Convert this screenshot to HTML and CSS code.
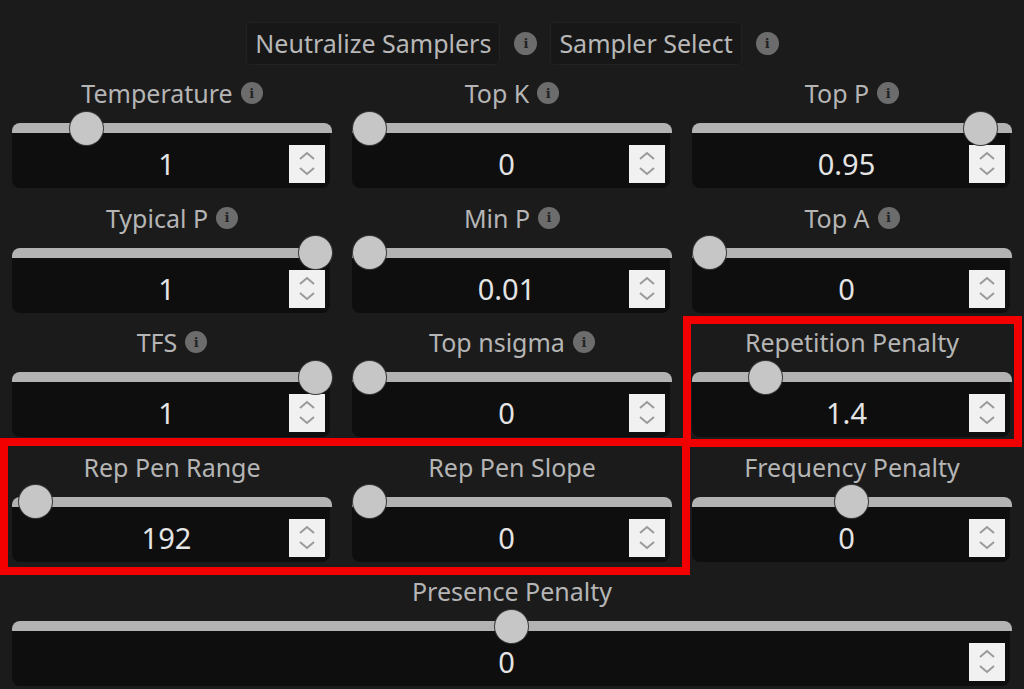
FILE: index.html
```html
<!DOCTYPE html>
<html lang="en">
<head>
<meta charset="utf-8">
<title>Samplers</title>
<link rel="stylesheet" href="styles.css">
</head>
<body>
<div class="panel">
  <div class="header">
    <div class="menu-btn">Neutralize Samplers</div>
    <span class="info big">i</span>
    <div class="menu-btn">Sampler Select</div>
    <span class="info big">i</span>
  </div>

  <div class="grid">
    <div class="cell">
      <div class="label"><span>Temperature</span><span class="info">i</span></div>
      <div class="track"><span class="thumb" style="left:74px"></span></div>
      <div class="field"><span class="value">1</span><span class="spin"><svg viewBox="0 0 36 38" width="36" height="38"><path d="M11 14 L18 8 L25 14 M11 23 L18 29 L25 23"/></svg></span></div>
    </div>
    <div class="cell">
      <div class="label"><span>Top K</span><span class="info">i</span></div>
      <div class="track"><span class="thumb" style="left:17px"></span></div>
      <div class="field"><span class="value">0</span><span class="spin"><svg viewBox="0 0 36 38" width="36" height="38"><path d="M11 14 L18 8 L25 14 M11 23 L18 29 L25 23"/></svg></span></div>
    </div>
    <div class="cell">
      <div class="label"><span>Top P</span><span class="info">i</span></div>
      <div class="track"><span class="thumb" style="left:288px"></span></div>
      <div class="field"><span class="value">0.95</span><span class="spin"><svg viewBox="0 0 36 38" width="36" height="38"><path d="M11 14 L18 8 L25 14 M11 23 L18 29 L25 23"/></svg></span></div>
    </div>

    <div class="cell">
      <div class="label"><span>Typical P</span><span class="info">i</span></div>
      <div class="track"><span class="thumb" style="left:303px"></span></div>
      <div class="field"><span class="value">1</span><span class="spin"><svg viewBox="0 0 36 38" width="36" height="38"><path d="M11 14 L18 8 L25 14 M11 23 L18 29 L25 23"/></svg></span></div>
    </div>
    <div class="cell">
      <div class="label"><span>Min P</span><span class="info">i</span></div>
      <div class="track"><span class="thumb" style="left:17px"></span></div>
      <div class="field"><span class="value">0.01</span><span class="spin"><svg viewBox="0 0 36 38" width="36" height="38"><path d="M11 14 L18 8 L25 14 M11 23 L18 29 L25 23"/></svg></span></div>
    </div>
    <div class="cell">
      <div class="label"><span>Top A</span><span class="info">i</span></div>
      <div class="track"><span class="thumb" style="left:17px"></span></div>
      <div class="field"><span class="value">0</span><span class="spin"><svg viewBox="0 0 36 38" width="36" height="38"><path d="M11 14 L18 8 L25 14 M11 23 L18 29 L25 23"/></svg></span></div>
    </div>

    <div class="cell">
      <div class="label"><span>TFS</span><span class="info">i</span></div>
      <div class="track"><span class="thumb" style="left:303px"></span></div>
      <div class="field"><span class="value">1</span><span class="spin"><svg viewBox="0 0 36 38" width="36" height="38"><path d="M11 14 L18 8 L25 14 M11 23 L18 29 L25 23"/></svg></span></div>
    </div>
    <div class="cell">
      <div class="label"><span>Top nsigma</span><span class="info">i</span></div>
      <div class="track"><span class="thumb" style="left:17px"></span></div>
      <div class="field"><span class="value">0</span><span class="spin"><svg viewBox="0 0 36 38" width="36" height="38"><path d="M11 14 L18 8 L25 14 M11 23 L18 29 L25 23"/></svg></span></div>
    </div>
    <div class="cell">
      <div class="label"><span>Repetition Penalty</span></div>
      <div class="track"><span class="thumb" style="left:73px"></span></div>
      <div class="field"><span class="value">1.4</span><span class="spin"><svg viewBox="0 0 36 38" width="36" height="38"><path d="M11 14 L18 8 L25 14 M11 23 L18 29 L25 23"/></svg></span></div>
    </div>

    <div class="cell">
      <div class="label"><span>Rep Pen Range</span></div>
      <div class="track"><span class="thumb" style="left:23px"></span></div>
      <div class="field"><span class="value">192</span><span class="spin"><svg viewBox="0 0 36 38" width="36" height="38"><path d="M11 14 L18 8 L25 14 M11 23 L18 29 L25 23"/></svg></span></div>
    </div>
    <div class="cell">
      <div class="label"><span>Rep Pen Slope</span></div>
      <div class="track"><span class="thumb" style="left:17px"></span></div>
      <div class="field"><span class="value">0</span><span class="spin"><svg viewBox="0 0 36 38" width="36" height="38"><path d="M11 14 L18 8 L25 14 M11 23 L18 29 L25 23"/></svg></span></div>
    </div>
    <div class="cell">
      <div class="label"><span>Frequency Penalty</span></div>
      <div class="track"><span class="thumb" style="left:159px"></span></div>
      <div class="field"><span class="value">0</span><span class="spin"><svg viewBox="0 0 36 38" width="36" height="38"><path d="M11 14 L18 8 L25 14 M11 23 L18 29 L25 23"/></svg></span></div>
    </div>

    <div class="cell wide">
      <div class="label"><span>Presence Penalty</span></div>
      <div class="track"><span class="thumb" style="left:499px"></span></div>
      <div class="field"><span class="value">0</span><span class="spin"><svg viewBox="0 0 36 38" width="36" height="38"><path d="M11 14 L18 8 L25 14 M11 23 L18 29 L25 23"/></svg></span></div>
    </div>
  </div>

  <div class="mark mark-a"></div>
  <div class="mark mark-b"></div>
</div>
</body>
</html>
```

FILE: styles.css
```css
* { box-sizing: border-box; }

html, body {
  margin: 0;
  padding: 0;
  background: #1b1b1b;
}

body {
  font-family: "Noto Sans", "Open Sans", sans-serif;
  color: #b5b5b5;
  width: 1024px;
  height: 689px;
  overflow: hidden;
}

.panel {
  position: relative;
  width: 1024px;
  height: 689px;
  padding: 22px 12px 0 12px;
}

.header {
  display: flex;
  justify-content: center;
  align-items: center;
  height: 43px;
  margin-bottom: 13px;
  padding-left: 14px;
}

.menu-btn {
  height: 43px;
  line-height: 41px;
  padding: 0 8px;
  font-size: 25px;
  color: #b8b8b8;
  background: #171717;
  border: 1px solid #222222;
  border-radius: 5px;
}

.info {
  display: inline-flex;
  align-items: center;
  justify-content: center;
  width: 22px;
  height: 22px;
  border-radius: 50%;
  background: #6c6c6c;
  color: #232323;
  font-family: "DejaVu Serif", serif;
  font-weight: bold;
  font-size: 13px;
  line-height: 1;
  margin-left: 8px;
  flex: none;
}

.info.big {
  width: 23px;
  height: 23px;
  margin: 0 13px 0 14px;
}

.grid {
  display: grid;
  grid-template-columns: repeat(3, 320px);
  column-gap: 20px;
  row-gap: 14.5px;
}

.cell.wide {
  grid-column: 1 / span 3;
}

.label {
  display: flex;
  justify-content: center;
  align-items: center;
  height: 30px;
  line-height: 30px;
  font-size: 25px;
  color: #b5b5b5;
  margin-bottom: 15px;
  white-space: nowrap;
}

.track {
  position: relative;
  height: 10px;
  background: #b3b3b3;
  border-radius: 8px 8px 0 0;
}

.thumb {
  position: absolute;
  top: -11.5px;
  width: 33px;
  height: 33px;
  margin-left: -16.5px;
  border-radius: 50%;
  background: #c6c6c6;
  box-shadow: 0 0 0 1px #3a3a3a;
}

.field {
  display: flex;
  align-items: flex-end;
  height: 55px;
  margin-right: 2px;
  padding: 0 5px 5px 0;
  background: #0e0e0e;
  border-radius: 0 0 8px 8px;
}

.value {
  flex: 1;
  text-align: center;
  padding-left: 32px;
  font-size: 29px;
  line-height: 38px;
  color: #e4e4e4;
}

.spin {
  display: block;
  width: 36px;
  height: 38px;
  background: #f1f1f1;
  flex: none;
}

.spin svg {
  display: block;
}

.spin path {
  fill: none;
  stroke: #9a9a9a;
  stroke-width: 2;
}

.mark {
  position: absolute;
  border: 8px solid #f20000;
  pointer-events: none;
}

.mark-a {
  left: 683px;
  top: 316px;
  width: 339px;
  height: 131px;
}

.mark-b {
  left: 0;
  top: 438px;
  width: 690px;
  height: 137px;
}
```
